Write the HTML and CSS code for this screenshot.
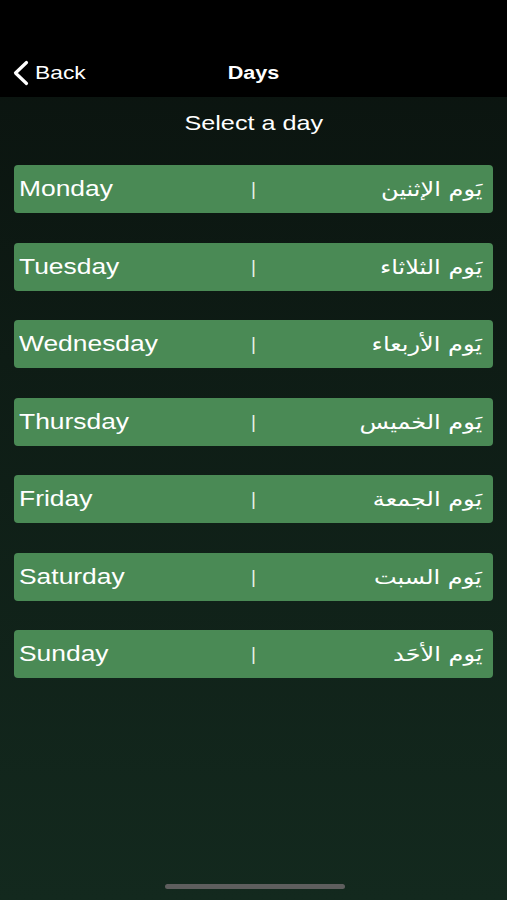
FILE: index.html
```html
<!DOCTYPE html>
<html lang="en">
<head>
<meta charset="utf-8">
<link rel="stylesheet" href="styles.css">
</head>
<body>
<div class="screen">
  <header class="nav">
    <div class="back">
      <svg class="chev" width="17" height="26" viewBox="0 0 17 26"><path d="M14.5 2.5 L3.5 13 L14.5 23.5" fill="none" stroke="#fff" stroke-width="3.2" stroke-linecap="round" stroke-linejoin="round"/></svg>
      <span class="back-label">Back</span>
    </div>
    <div class="title">Days</div>
  </header>
  <main class="content">
    <h1 class="heading"><span class="wide">Select a day</span></h1>
    <ul class="days">
      <li class="day"><span class="en"><span class="wide">Monday</span></span><span class="sep">|</span><span class="ar"><span class="wide" dir="rtl">يَوم الإثنين</span></span></li>
      <li class="day"><span class="en"><span class="wide">Tuesday</span></span><span class="sep">|</span><span class="ar"><span class="wide" dir="rtl">يَوم الثلاثاء</span></span></li>
      <li class="day"><span class="en"><span class="wide">Wednesday</span></span><span class="sep">|</span><span class="ar"><span class="wide" dir="rtl">يَوم الأربعاء</span></span></li>
      <li class="day"><span class="en"><span class="wide">Thursday</span></span><span class="sep">|</span><span class="ar"><span class="wide" dir="rtl">يَوم الخميس</span></span></li>
      <li class="day"><span class="en"><span class="wide">Friday</span></span><span class="sep">|</span><span class="ar"><span class="wide" dir="rtl">يَوم الجمعة</span></span></li>
      <li class="day"><span class="en"><span class="wide">Saturday</span></span><span class="sep">|</span><span class="ar"><span class="wide" dir="rtl">يَوم السبت</span></span></li>
      <li class="day"><span class="en"><span class="wide">Sunday</span></span><span class="sep">|</span><span class="ar"><span class="wide" dir="rtl">يَوم الأحَد</span></span></li>
    </ul>
  </main>
  <div class="home-bar"></div>
</div>
</body>
</html>
```

FILE: styles.css
```css
* { box-sizing: border-box; }
html, body { margin: 0; padding: 0; }
body {
  width: 507px;
  height: 900px;
  overflow: hidden;
  font-family: "Liberation Sans", Arial, sans-serif;
  color: #fff;
  background: #000;
}
.screen {
  position: relative;
  width: 507px;
  height: 900px;
  display: flex;
  flex-direction: column;
  background: linear-gradient(180deg, #0a120e 0%, #0e1c15 40%, #13291e 100%);
}
.wide {
  display: inline-block;
  transform: scaleX(1.2);
}
.nav {
  position: relative;
  height: 97px;
  background: #000;
  display: flex;
  align-items: flex-end;
  justify-content: center;
  padding-bottom: 12px;
}
.back {
  position: absolute;
  left: 12px;
  bottom: 11px;
  display: flex;
  align-items: center;
  gap: 6px;
  font-size: 19px;
}
.back-label {
  display: inline-block;
  transform: scaleX(1.2);
  transform-origin: left center;
}
.chev { display: block; }
.title {
  font-size: 18px;
  font-weight: bold;
  line-height: 24px;
  transform: scaleX(1.2);
}
.content {
  flex: 1;
  display: flex;
  flex-direction: column;
  padding: 0 14px;
}
.heading {
  margin: 0;
  padding-top: 12px;
  height: 68px;
  text-align: center;
  font-size: 21px;
  font-weight: normal;
  line-height: 28px;
}
.days {
  list-style: none;
  margin: 0;
  padding: 0;
  display: flex;
  flex-direction: column;
  gap: 29.5px;
}
.day {
  height: 48px;
  background: #4a8a55;
  border-radius: 4px;
  display: grid;
  grid-template-columns: 1fr auto 1fr;
  align-items: center;
  padding: 0 5px;
}
.en {
  font-size: 22px;
  line-height: 26px;
}
.en .wide { transform-origin: left center; }
.sep {
  font-size: 19px;
  color: #e8f0e8;
}
.ar {
  text-align: right;
  padding-right: 6px;
  font-family: "DejaVu Sans", "Noto Sans", sans-serif;
  font-size: 20px;
}
.ar .wide { transform-origin: right center; }
.home-bar {
  position: absolute;
  left: 165px;
  bottom: 11px;
  width: 180px;
  height: 5px;
  border-radius: 3px;
  background: #5e5e5e;
}
```
